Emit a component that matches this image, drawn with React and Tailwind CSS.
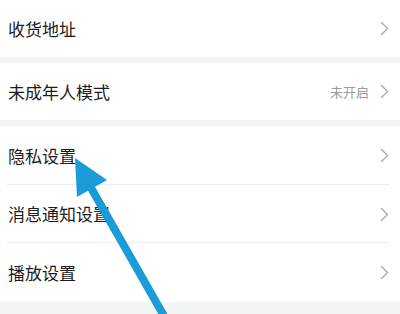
import React from 'react';

const font = { fontFamily: '"Noto Sans CJK SC", "Noto Sans", sans-serif' };

function Chevron() {
  return (
    <svg width="9" height="15" viewBox="0 0 9 15" fill="none" className="shrink-0">
      <path d="M1.5 1.5L7.5 7.5L1.5 13.5" stroke="#a8a8a8" strokeWidth="1.4" strokeLinecap="round" strokeLinejoin="round" />
    </svg>
  );
}

function Row({ label, value, h = 'h-[57px]', divider }) {
  return (
    <div className={`relative bg-white ${h} flex items-center pl-[8px] pr-[11px]`}>
      <span className="flex-1 text-[17px] text-[#1c1c1c]">{label}</span>
      {value && <span className="text-[13px] text-[#9a9a9a] mr-[11px]">{value}</span>}
      <Chevron />
      {divider && <div className="absolute left-[7px] right-[10px] bottom-0 h-px bg-[#ececec]" />}
    </div>
  );
}

export default function App() {
  return (
    <div className="relative w-[400px] h-[314px] overflow-hidden bg-[#f3f5f5]" style={font}>
      <Row label="收货地址" />
      <div className="h-[6px]" />
      <Row label="未成年人模式" value="未开启" />
      <div className="h-[6px]" />
      <Row label="隐私设置" h="h-[59px]" divider />
      <Row label="消息通知设置" h="h-[58px]" divider />
      <Row label="播放设置" h="h-[59px]" />

      {/* blue arrow annotation */}
      <svg className="absolute inset-0 pointer-events-none" width="400" height="314" viewBox="0 0 400 314">
        <line x1="90" y1="186" x2="172" y2="330" stroke="#1b9bd7" strokeWidth="8" />
        <polygon points="75,158 107,180 77,197" fill="#1b9bd7" />
      </svg>
    </div>
  );
}
